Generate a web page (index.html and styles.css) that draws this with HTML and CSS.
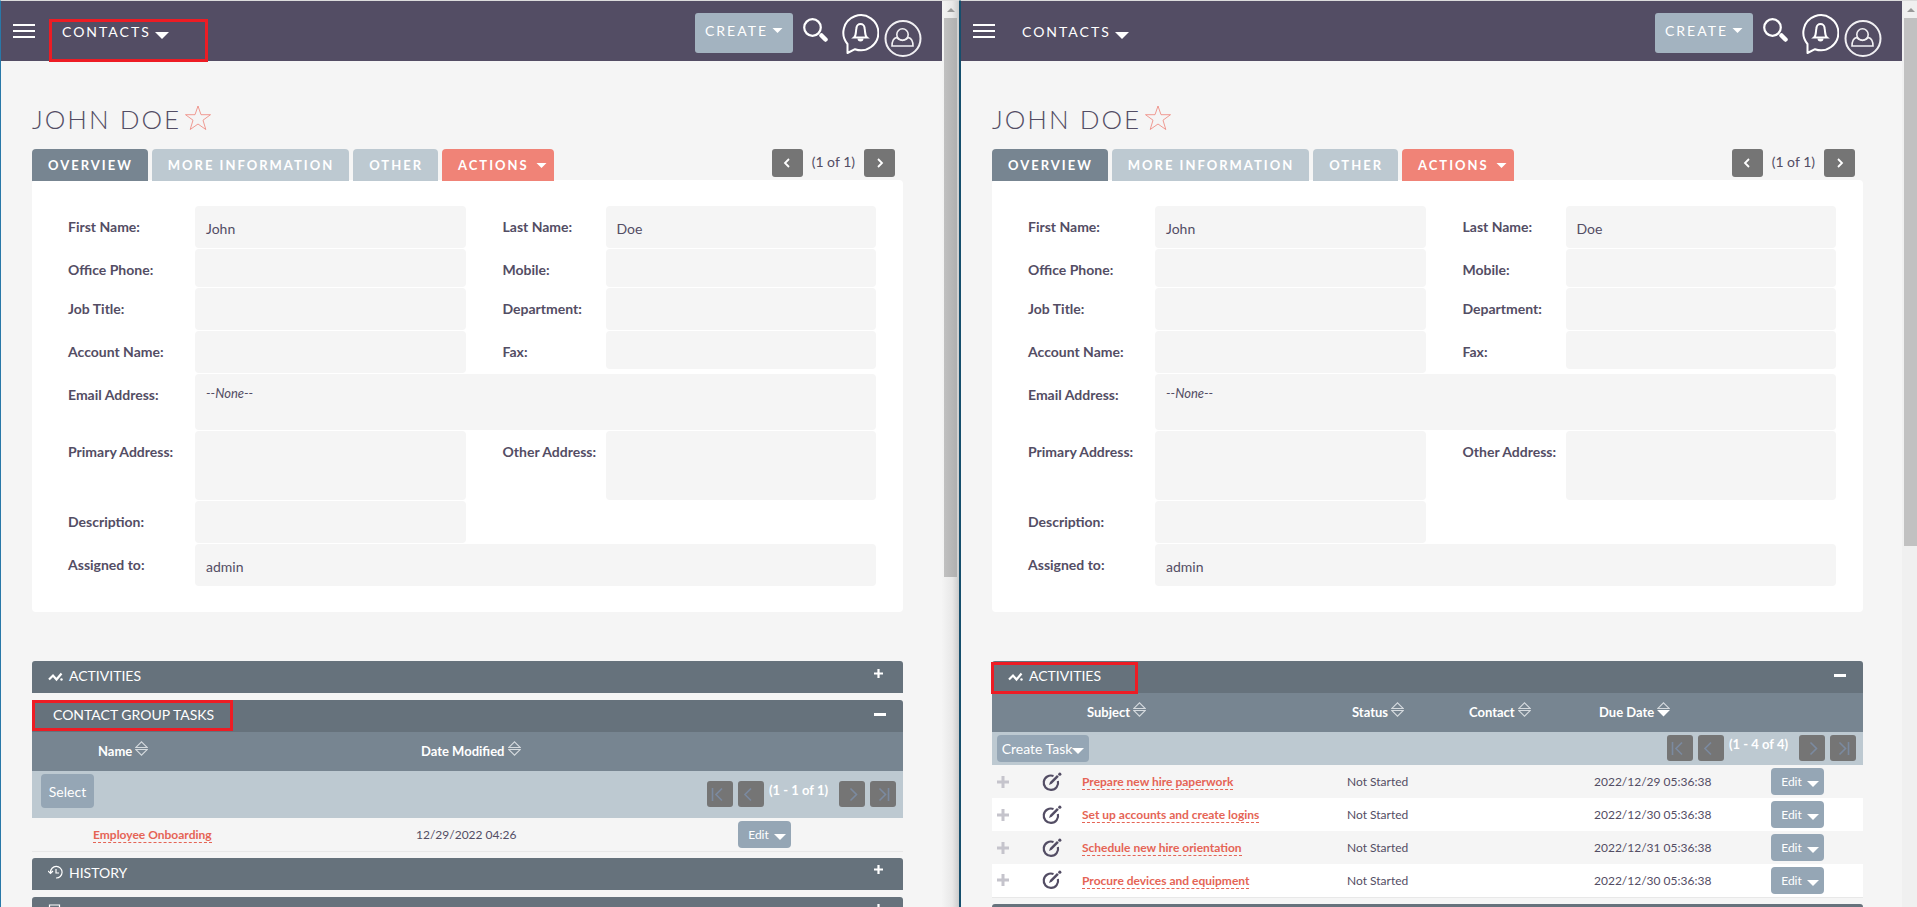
FILE: index.html
```html
<!DOCTYPE html>
<html lang="en">
<head>
  <meta charset="UTF-8" />
  <meta name="viewport" content="width=device-width, initial-scale=1.0"/>
  <title>John Doe - Contacts</title>
  <link rel="stylesheet" href="styles.css">
</head>
<body>

  <!-- shared icons -->
  <svg class="sprite" aria-hidden="true">
    <symbol id="i-menu" viewBox="0 0 22 14"><path d="M0 1h22M0 7h22M0 13h22" stroke="#fff" stroke-width="2"/></symbol>
    <symbol id="i-caret" viewBox="0 0 14 7"><path d="M0 0h14L7 7z" fill="#fff"/></symbol>
    <symbol id="i-search" viewBox="0 0 25 24"><circle cx="9.500" cy="9.500" r="8.300" fill="none" stroke="#fff" stroke-width="2.200"/><path d="M18.500 17.500l4 4" stroke="#fff" stroke-width="4.500" stroke-linecap="round"/></symbol>
    <symbol id="i-bell" viewBox="0 0 37 40"><path d="M5.500 39V30A17.500 17.500 0 1 1 13 35.200z" fill="none" stroke="#fff" stroke-width="2" stroke-linejoin="round"/><path d="M12 23.500c2.500-2 1.500-6 2.500-9.500a4 4 0 0 1 8 0c1 3.500 0 7.500 2.500 9.500z" fill="none" stroke="#fff" stroke-width="2"/><path d="M15.500 24.500h6a3 3 0 0 1-6 0z" fill="#fff"/></symbol>
    <symbol id="i-user" viewBox="0 0 38 38"><g fill="none" stroke="#f1f0f3" stroke-width="2"><circle cx="19" cy="18.500" r="17.500"/><circle cx="18.500" cy="14.500" r="5.700" stroke-width="1.600"/><path d="M12.500 17.500c-3.500 1-4.500 4-4.500 8.500h21c0-4.500-1-7.500-4.500-8.500-3.500 4-8.500 4-12 0z" stroke-width="1.600"/></g></symbol>
    <symbol id="i-star" viewBox="0 0 26 25"><path d="M13 1l3 8.700h9.500l-7.500 5.500 2.800 9.300-7.800-5.500-7.800 5.500L8 15.200.5 9.700H10z" fill="none" stroke="#ee8379" stroke-width=".8"/></symbol>
    <symbol id="i-prev" viewBox="0 0 8 10"><path d="M6 1L2 5l4 4" fill="none" stroke="#fff" stroke-width="1.800"/></symbol>
    <symbol id="i-next" viewBox="0 0 8 10"><path d="M2 1l4 4-4 4" fill="none" stroke="#fff" stroke-width="1.800"/></symbol>
    <symbol id="i-pfirst" viewBox="0 0 26 26"><path d="M5.500 7v13M15 7.500L9 13.500l6 6" fill="none" stroke="#7b8aa0" stroke-width="1.600"/></symbol>
    <symbol id="i-pprev" viewBox="0 0 26 26"><path d="M13 7.500l-6 6 6 6" fill="none" stroke="#7b8aa0" stroke-width="1.600"/></symbol>
    <symbol id="i-pnext" viewBox="0 0 26 26"><path d="M11.500 7.500l6 6-6 6" fill="none" stroke="#7b8aa0" stroke-width="1.600"/></symbol>
    <symbol id="i-plast" viewBox="0 0 26 26"><path d="M9.500 7.500l6 6-6 6M18.500 7v13" fill="none" stroke="#7b8aa0" stroke-width="1.600"/></symbol>
    <symbol id="i-activity" viewBox="0 0 15 14"><path d="M1 10.500l4-4 3.500 4 5-6" fill="none" stroke="#fff" stroke-width="2.200"/><circle cx="13.500" cy="10.500" r="1.200" fill="#fff"/></symbol>
    <symbol id="i-history" viewBox="0 0 15 14"><path d="M2.500 7.500a5.800 5.800 0 1 1 5.500 5.500M0 6l2.500 2.500L5 6M8 4v4h3" fill="none" stroke="#fff" stroke-width="1.200"/></symbol>
    <symbol id="i-doc" viewBox="0 0 15 14"><path d="M1.500 1h10v12h-10zM4 5h5M4 8h5" fill="none" stroke="#fff" stroke-width="1.200"/></symbol>
    <symbol id="i-plus" viewBox="0 0 9 9"><path d="M4.500 0v9M0 4.500h9" stroke="#fff" stroke-width="2.200"/></symbol>
    <symbol id="i-minus" viewBox="0 0 12 9"><path d="M0 4.500h12" stroke="#fff" stroke-width="3"/></symbol>
    <symbol id="i-sort" viewBox="0 0 12 14"><path d="M.8 6L6 .8 11.200 6zM.8 8h10.400L6 13.200z" fill="none" stroke="#d5dade"/></symbol>
    <symbol id="i-sorted" viewBox="0 0 12 14"><path d="M.8 6L6 .8 11.200 6z" fill="none" stroke="#d5dade"/><path d="M0 7.500h12l-6 6z" fill="#fff"/></symbol>
    <symbol id="i-add" viewBox="0 0 12 12"><path d="M6 0v12M0 6h12" stroke="#c5c4cc" stroke-width="3"/></symbol>
    <symbol id="i-edit" viewBox="0 0 20 20"><path d="M11.500 4A7.200 7.200 0 1 0 15.900 9" fill="none" stroke="#534d64" stroke-width="2.200"/><path d="M7 13l1-3 7-7 1.800 1.800-7 7z" fill="#534d64"/><circle cx="17.800" cy="2.200" r="1.600" fill="#534d64"/></symbol>
  </svg>

  <div class="desktop">

    <!-- left window -->
    <div class="window window-left">
      <div class="page">
        <header class="topbar">
          <button class="plain" aria-label="Menu"><svg class="menu-icon"><use href="#i-menu"/></svg></button>
          <button class="plain module">CONTACTS <svg class="caret"><use href="#i-caret"/></svg></button>
          <span class="mark mark-module"></span>
          <div class="top-actions">
            <button class="create">CREATE <svg class="caret-sm"><use href="#i-caret"/></svg></button>
            <button class="plain" aria-label="Search"><svg class="search-icon"><use href="#i-search"/></svg></button>
            <button class="plain" aria-label="Notifications"><svg class="bell-icon"><use href="#i-bell"/></svg></button>
            <button class="plain" aria-label="Profile"><svg class="user-icon"><use href="#i-user"/></svg></button>
          </div>
        </header>

        <main>
          <h1>JOHN DOE <svg class="star"><use href="#i-star"/></svg></h1>

          <div class="tabs">
            <button class="tab active">OVERVIEW</button>
            <button class="tab">MORE INFORMATION</button>
            <button class="tab">OTHER</button>
            <button class="tab actions">ACTIONS <svg class="caret-sm"><use href="#i-caret"/></svg></button>
            <div class="record-nav">
              <button aria-label="Previous"><svg><use href="#i-prev"/></svg></button>
              <span>(1 of 1)</span>
              <button aria-label="Next"><svg><use href="#i-next"/></svg></button>
            </div>
          </div>

          <section class="detail">
            <div class="label">First Name:</div><div class="field">John</div>
            <div class="label second">Last Name:</div><div class="field">Doe</div>
            <div class="label">Office Phone:</div><div class="field short"></div>
            <div class="label second">Mobile:</div><div class="field short"></div>
            <div class="label">Job Title:</div><div class="field"></div>
            <div class="label second">Department:</div><div class="field"></div>
            <div class="label">Account Name:</div><div class="field"></div>
            <div class="label second">Fax:</div><div class="field short"></div>
            <div class="label">Email Address:</div><div class="field wide email"><em>--None--</em></div>
            <div class="label">Primary Address:</div><div class="field address"></div>
            <div class="label second">Other Address:</div><div class="field address"></div>
            <div class="label">Description:</div><div class="field"></div>
            <div class="label">Assigned to:</div><div class="field wide">admin</div>
          </section>

          <section class="panel">
            <h2><svg class="panel-icon"><use href="#i-activity"/></svg>ACTIVITIES<svg class="toggle"><use href="#i-plus"/></svg></h2>
          </section>

          <section class="panel">
            <h2 class="no-icon">CONTACT GROUP TASKS<svg class="toggle minus"><use href="#i-minus"/></svg><span class="mark mark-group"></span></h2>
            <table class="group-table">
              <colgroup><col class="c-pad"><col class="c-name"><col class="c-modified"><col></colgroup>
              <thead>
                <tr>
                  <th></th>
                  <th>Name <svg class="sort"><use href="#i-sort"/></svg></th>
                  <th>Date Modified <svg class="sort"><use href="#i-sort"/></svg></th>
                  <th></th>
                </tr>
                <tr>
                  <td colspan="4" class="tools">
                    <div class="toolbar tall">
                      <button class="btn select">Select</button>
                      <div class="pager">
                        <button aria-label="First"><svg><use href="#i-pfirst"/></svg></button>
                        <button aria-label="Previous"><svg><use href="#i-pprev"/></svg></button>
                        <span>(1 - 1 of 1)</span>
                        <button aria-label="Next"><svg><use href="#i-pnext"/></svg></button>
                        <button aria-label="Last"><svg><use href="#i-plast"/></svg></button>
                      </div>
                    </div>
                  </td>
                </tr>
              </thead>
              <tbody>
                <tr>
                  <td></td>
                  <td><a href="#">Employee Onboarding</a></td>
                  <td>12/29/2022 04:26</td>
                  <td><button class="btn edit">Edit <svg class="caret-edit"><use href="#i-caret"/></svg></button></td>
                </tr>
              </tbody>
            </table>
          </section>

          <section class="panel">
            <h2><svg class="panel-icon"><use href="#i-history"/></svg>HISTORY<svg class="toggle"><use href="#i-plus"/></svg></h2>
          </section>

          <section class="panel">
            <h2><svg class="panel-icon"><use href="#i-doc"/></svg><svg class="toggle"><use href="#i-plus"/></svg></h2>
          </section>
        </main>
      </div>
      <div class="scrollbar"><span class="up"></span><span class="thumb"></span></div>
    </div>

    <!-- right window -->
    <div class="window window-right">
      <div class="page">
        <header class="topbar">
          <button class="plain" aria-label="Menu"><svg class="menu-icon"><use href="#i-menu"/></svg></button>
          <button class="plain module">CONTACTS <svg class="caret"><use href="#i-caret"/></svg></button>
          <div class="top-actions">
            <button class="create">CREATE <svg class="caret-sm"><use href="#i-caret"/></svg></button>
            <button class="plain" aria-label="Search"><svg class="search-icon"><use href="#i-search"/></svg></button>
            <button class="plain" aria-label="Notifications"><svg class="bell-icon"><use href="#i-bell"/></svg></button>
            <button class="plain" aria-label="Profile"><svg class="user-icon"><use href="#i-user"/></svg></button>
          </div>
        </header>

        <main>
          <h1>JOHN DOE <svg class="star"><use href="#i-star"/></svg></h1>

          <div class="tabs">
            <button class="tab active">OVERVIEW</button>
            <button class="tab">MORE INFORMATION</button>
            <button class="tab">OTHER</button>
            <button class="tab actions">ACTIONS <svg class="caret-sm"><use href="#i-caret"/></svg></button>
            <div class="record-nav">
              <button aria-label="Previous"><svg><use href="#i-prev"/></svg></button>
              <span>(1 of 1)</span>
              <button aria-label="Next"><svg><use href="#i-next"/></svg></button>
            </div>
          </div>

          <section class="detail">
            <div class="label">First Name:</div><div class="field">John</div>
            <div class="label second">Last Name:</div><div class="field">Doe</div>
            <div class="label">Office Phone:</div><div class="field short"></div>
            <div class="label second">Mobile:</div><div class="field short"></div>
            <div class="label">Job Title:</div><div class="field"></div>
            <div class="label second">Department:</div><div class="field"></div>
            <div class="label">Account Name:</div><div class="field"></div>
            <div class="label second">Fax:</div><div class="field short"></div>
            <div class="label">Email Address:</div><div class="field wide email"><em>--None--</em></div>
            <div class="label">Primary Address:</div><div class="field address"></div>
            <div class="label second">Other Address:</div><div class="field address"></div>
            <div class="label">Description:</div><div class="field"></div>
            <div class="label">Assigned to:</div><div class="field wide">admin</div>
          </section>

          <section class="panel">
            <h2><svg class="panel-icon"><use href="#i-activity"/></svg>ACTIVITIES<svg class="toggle minus"><use href="#i-minus"/></svg><span class="mark mark-activities"></span></h2>
            <table class="task-table">
              <colgroup><col class="c-plus"><col class="c-icon"><col class="c-subject"><col class="c-status"><col class="c-contact"><col class="c-due"><col></colgroup>
              <thead>
                <tr>
                  <th></th>
                  <th></th>
                  <th>Subject <svg class="sort"><use href="#i-sort"/></svg></th>
                  <th>Status <svg class="sort"><use href="#i-sort"/></svg></th>
                  <th>Contact <svg class="sort"><use href="#i-sort"/></svg></th>
                  <th>Due Date <svg class="sort"><use href="#i-sorted"/></svg></th>
                  <th></th>
                </tr>
                <tr>
                  <td colspan="7" class="tools">
                    <div class="toolbar">
                      <button class="btn create-task">Create Task<svg class="caret-edit"><use href="#i-caret"/></svg></button>
                      <div class="pager">
                        <button aria-label="First"><svg><use href="#i-pfirst"/></svg></button>
                        <button aria-label="Previous"><svg><use href="#i-pprev"/></svg></button>
                        <span>(1 - 4 of 4)</span>
                        <button aria-label="Next"><svg><use href="#i-pnext"/></svg></button>
                        <button aria-label="Last"><svg><use href="#i-plast"/></svg></button>
                      </div>
                    </div>
                  </td>
                </tr>
              </thead>
              <tbody>
                <tr>
                  <td><svg class="add"><use href="#i-add"/></svg></td>
                  <td><svg class="pencil"><use href="#i-edit"/></svg></td>
                  <td><a href="#">Prepare new hire paperwork</a></td>
                  <td>Not Started</td>
                  <td></td>
                  <td>2022/12/29 05:36:38</td>
                  <td><button class="btn edit">Edit <svg class="caret-edit"><use href="#i-caret"/></svg></button></td>
                </tr>
                <tr>
                  <td><svg class="add"><use href="#i-add"/></svg></td>
                  <td><svg class="pencil"><use href="#i-edit"/></svg></td>
                  <td><a href="#">Set up accounts and create logins</a></td>
                  <td>Not Started</td>
                  <td></td>
                  <td>2022/12/30 05:36:38</td>
                  <td><button class="btn edit">Edit <svg class="caret-edit"><use href="#i-caret"/></svg></button></td>
                </tr>
                <tr>
                  <td><svg class="add"><use href="#i-add"/></svg></td>
                  <td><svg class="pencil"><use href="#i-edit"/></svg></td>
                  <td><a href="#">Schedule new hire orientation</a></td>
                  <td>Not Started</td>
                  <td></td>
                  <td>2022/12/31 05:36:38</td>
                  <td><button class="btn edit">Edit <svg class="caret-edit"><use href="#i-caret"/></svg></button></td>
                </tr>
                <tr>
                  <td><svg class="add"><use href="#i-add"/></svg></td>
                  <td><svg class="pencil"><use href="#i-edit"/></svg></td>
                  <td><a href="#">Procure devices and equipment</a></td>
                  <td>Not Started</td>
                  <td></td>
                  <td>2022/12/30 05:36:38</td>
                  <td><button class="btn edit">Edit <svg class="caret-edit"><use href="#i-caret"/></svg></button></td>
                </tr>
              </tbody>
            </table>
          </section>

          <section class="panel">
            <h2></h2>
          </section>
        </main>
      </div>
      <div class="scrollbar"><span class="up"></span><span class="thumb"></span></div>
    </div>

  </div>

</body>
</html>
```
FILE: styles.css
```css
* {
  box-sizing: border-box;
}

body {
  margin: 0;
  font-family: Lato, "Liberation Sans", sans-serif;
  font-size: 14px;
  color: #534d64;
  background: #f5f5f5;
}

button {
  font-family: inherit;
  border: none;
  padding: 0;
  color: #fff;
  cursor: pointer;
}

svg {
  display: block;
  flex: none;
}

.sprite {
  position: absolute;
  width: 0;
  height: 0;
}

/* the two browser windows */
.desktop {
  display: flex;
  height: 100vh;
  overflow: hidden;
}

.window {
  flex: 0 0 calc((100% + 3px) / 2);
  display: flex;
  overflow: hidden;
  border-top: 1px solid #dcdcdc;
}

.window-left {
  border-left: 1px solid #2878a8;
  border-right: 1px solid #164f6d;
}

.window-right {
  border-left: 1px solid #164f6d;
}

.page {
  flex: 1;
  min-width: 0;
}

.scrollbar {
  flex: none;
  width: 17px;
  padding: 0 2px;
  background: #f0f0f0;
}

.window-left .scrollbar {
  background: linear-gradient(to right, #f4f4f4, #e8e8e8 60%, #cccccc);
}

.window-right .scrollbar {
  width: 18px;
}

.scrollbar .up {
  display: block;
  height: 17px;
  padding-top: 7px;
}

.scrollbar .up::after {
  content: "";
  display: block;
  width: 0;
  margin: 0 auto;
  border: 4px solid transparent;
  border-top: none;
  border-bottom-color: #999;
}

.scrollbar .thumb {
  display: block;
  height: 61.7%;
  background: #c1c1c1;
}

.window-left .thumb {
  background: linear-gradient(to right, #c1c1c1, #b0b0b0);
}

.window-right .thumb {
  height: 58.3%;
}

/* red highlight boxes */
.mark {
  position: absolute;
  border: 3px solid #ed1c24;
  pointer-events: none;
}

.mark-module {
  left: 48px;
  top: 18px;
  width: 159px;
  height: 43px;
}

.mark-group {
  left: 0;
  top: 0;
  width: 201px;
  height: 31px;
}

.mark-activities {
  left: -1px;
  top: 1px;
  width: 147px;
  height: 32px;
}

/* top bar */
.topbar {
  position: relative;
  display: flex;
  align-items: flex-start;
  height: 60px;
  padding: 12px 20px 0 12px;
  background: #534d64;
}

.plain {
  background: none;
}

.menu-icon {
  width: 22px;
  height: 14px;
  margin-top: 11px;
}

.module {
  display: flex;
  align-items: center;
  gap: 4px;
  margin-left: 27px;
  height: 36px;
  font-size: 14px;
  letter-spacing: 2px;
}

.caret {
  width: 14px;
  height: 7px;
  margin-top: 8px;
}

.caret-sm {
  width: 11px;
  height: 5px;
}

.top-actions {
  display: flex;
  align-items: flex-start;
  margin-left: auto;
}

.create {
  display: flex;
  align-items: center;
  justify-content: space-between;
  width: 98px;
  height: 40px;
  padding: 0 10px 6px;
  border-radius: 3px;
  background: #a3b3c0;
  font-size: 14px;
  letter-spacing: 2px;
}

.search-icon {
  width: 25px;
  height: 24px;
  margin: 5px 14px 0 10px;
}

.bell-icon {
  width: 37px;
  height: 40px;
  margin: 1px 5px 0 0;
}

.user-icon {
  width: 38px;
  height: 38px;
  margin-top: 7px;
}

/* record */
main {
  padding: 0 39px 0 31px;
}

h1 {
  display: flex;
  align-items: flex-start;
  gap: 4px;
  margin: 0;
  padding-top: 38px;
  height: 88px;
  font-size: 26px;
  line-height: 40px;
  font-weight: 300;
  letter-spacing: 2px;
}

.star {
  width: 26px;
  height: 25px;
  margin-top: 6px;
}

.tabs {
  display: flex;
  gap: 4px;
  height: 32px;
  position: relative;
}

.tab {
  padding: 0 15px 0 16px;
  border-radius: 4px 4px 0 0;
  background: #bdc9d1;
  font-size: 13px;
  font-weight: bold;
  letter-spacing: 2px;
}

.tab.active {
  background: #778591;
}

.tab.actions {
  display: flex;
  align-items: center;
  gap: 7px;
  padding-right: 7px;
  background: #f08377;
}

.record-nav {
  display: flex;
  align-items: flex-start;
  gap: 9px;
  margin-left: auto;
  padding-right: 8px;
  line-height: 26px;
}

.record-nav button {
  display: flex;
  align-items: center;
  justify-content: center;
  width: 31px;
  height: 28px;
  border-radius: 3px;
  background: #757575;
}

.record-nav svg {
  width: 8px;
  height: 10px;
}

.detail {
  display: grid;
  grid-template-columns: 127px 1fr 140px 1fr;
  row-gap: 1px;
  margin-top: -1px;
  padding: 26px 27px 26px 36px;
  border-radius: 4px;
  background: #fff;
}

.label {
  grid-column: 1;
  padding-top: 12px;
  line-height: 18px;
  font-weight: bold;
}

.label.second {
  grid-column: 3;
  padding-left: 37px;
}

.field {
  align-self: start;
  min-height: 42px;
  padding: 14px 11px 0;
  border-radius: 4px;
  background: #f5f5f5;
  line-height: 18px;
}

.field.short {
  min-height: 38px;
}

.field.wide {
  grid-column: 2 / -1;
}

.field.email {
  min-height: 56px;
  padding-top: 10px;
  font-size: 13px;
}

.field.address {
  min-height: 69px;
}

.detail + .panel {
  margin-top: 49px;
}

/* subpanels */
.panel {
  margin-bottom: 7px;
}

h2 {
  position: relative;
  display: flex;
  align-items: center;
  gap: 6px;
  height: 32px;
  margin: 0;
  padding: 0 20px 3px 16px;
  border-radius: 3px 3px 0 0;
  background: #66727c;
  color: #fff;
  font-size: 14px;
  font-weight: normal;
}

h2.no-icon {
  padding-left: 21px;
}

.panel-icon {
  width: 15px;
  height: 14px;
}

.toggle {
  width: 9px;
  height: 9px;
  margin: -5px 0 0 auto;
}

.toggle.minus {
  width: 12px;
  margin: -1px -3px 0 auto;
}

table {
  width: 100%;
  margin-bottom: -1px;
  table-layout: fixed;
  border-collapse: collapse;
  border-bottom: 1px solid #e8e8e8;
}

.c-pad { width: 56px; }
.c-name { width: 323px; }
.c-modified { width: 322px; }

.c-plus { width: 45px; }
.c-icon { width: 40px; }
.c-subject { width: 265px; }
.c-status { width: 117px; }
.c-contact { width: 130px; }
.c-due { width: 177px; }

th {
  height: 39px;
  padding: 0 10px 4px;
  background: #778591;
  color: #fff;
  font-size: 13px;
  text-align: left;
  white-space: nowrap;
}

.sort {
  display: inline-block;
  width: 13px;
  height: 15px;
  vertical-align: 0;
}

td {
  height: 33px;
  padding: 0 5px;
  font-size: 12px;
}

td.tools {
  height: auto;
  padding: 0;
  background: #bdc9d1;
}

.task-table tbody tr:nth-child(even) {
  background: #fff;
}

td a {
  color: #e56455;
  font-weight: bold;
  text-decoration: none;
  border-bottom: 1px dashed #e56455;
}

.toolbar {
  display: flex;
  align-items: flex-start;
  justify-content: space-between;
  height: 33px;
  padding: 3px 7px 0 5px;
}

.toolbar.tall {
  height: 47px;
  padding-left: 9px;
}

.tall .pager {
  margin-top: 7px;
}

.pager {
  display: flex;
  gap: 5px;
  color: #fff;
  font-size: 13px;
  font-weight: bold;
  line-height: 18px;
}

.pager span {
  padding-right: 6px;
}

.pager button {
  width: 26px;
  height: 26px;
  border-radius: 3px;
  background: #757575;
}

.pager svg {
  width: 26px;
  height: 26px;
}

.btn {
  display: flex;
  align-items: center;
  justify-content: center;
  height: 27px;
  border-radius: 4px;
  background: #95a6b5;
  font-size: 14px;
}

.btn.select {
  width: 53px;
  height: 34px;
}

.btn.create-task {
  width: 92px;
}

.btn.edit {
  width: 53px;
  gap: 5px;
  padding-left: 5px;
  font-size: 12px;
}

.caret-edit {
  width: 12px;
  height: 6px;
  margin-top: 5px;
}

.add {
  width: 12px;
  height: 12px;
}

.pencil {
  width: 20px;
  height: 20px;
}
```
